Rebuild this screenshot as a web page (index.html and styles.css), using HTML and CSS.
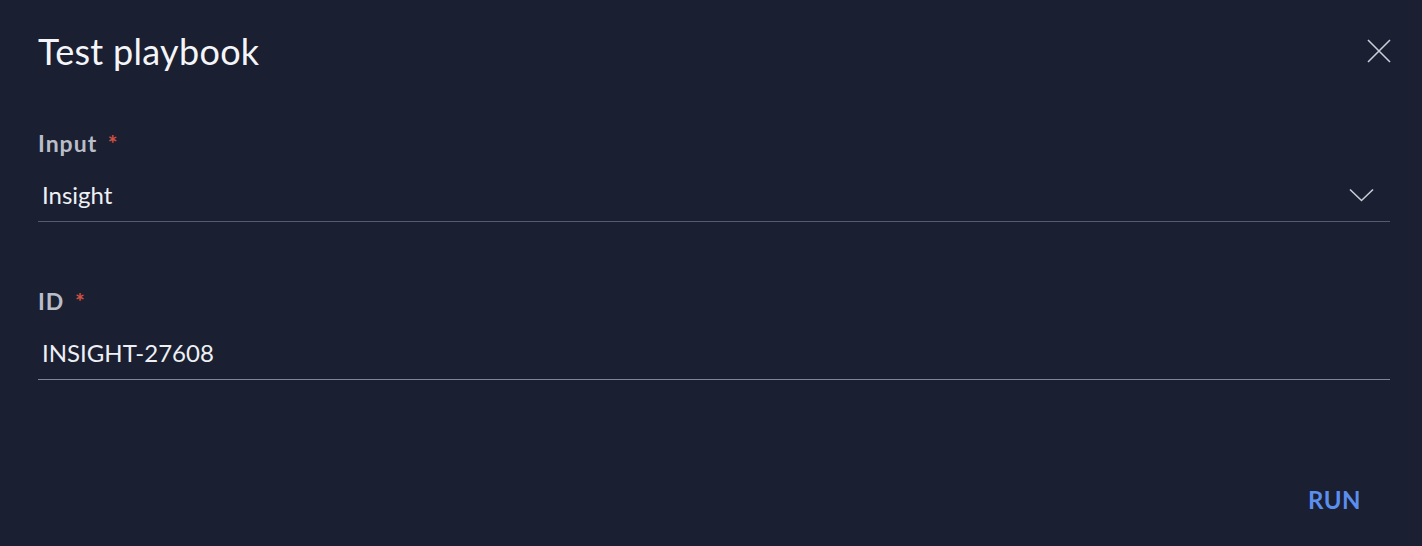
FILE: index.html
```html
<!DOCTYPE html>
<html>
<head>
<meta charset="utf-8">
<link rel="stylesheet" href="styles.css">
</head>
<body>
<div class="dialog">
  <header class="header">
    <h1 class="title">Test playbook</h1>
    <button class="close" aria-label="Close">
      <svg width="24" height="24" viewBox="0 0 24 24"><path d="M1 1L23 23M23 1L1 23" stroke="#c9cdd8" stroke-width="1.6" fill="none"/></svg>
    </button>
  </header>
  <div class="field field-first">
    <label class="label">Input <span class="req">*</span></label>
    <div class="control">
      <span class="value value-select">Insight</span>
      <svg class="chevron" width="25" height="14" viewBox="0 0 25 14"><path d="M1 1.5L12.5 12.5L24 1.5" stroke="#c9cdd8" stroke-width="1.6" fill="none"/></svg>
    </div>
  </div>
  <div class="field field-second">
    <label class="label">ID <span class="req">*</span></label>
    <div class="control control-text">
      <span class="value">INSIGHT-27608</span>
    </div>
  </div>
  <footer class="footer">
    <button class="run">RUN</button>
  </footer>
</div>
</body>
</html>
```
FILE: styles.css
```css
html, body {
  margin: 0;
  padding: 0;
  background: #1a1f32;
  height: 100%;
}
body {
  font-family: Lato, "Noto Sans", sans-serif;
  color: #eef0f4;
}
.dialog {
  padding: 0 32px 0 38px;
  height: 546px;
  box-sizing: border-box;
  display: flex;
  flex-direction: column;
}
.header {
  display: flex;
  justify-content: space-between;
  align-items: center;
  height: 102px;
}
.title {
  margin: 0;
  font-weight: 400;
  font-size: 36px;
  color: #f4f5f8;
  letter-spacing: 0.3px;
}
.close {
  background: none;
  border: 0;
  padding: 0;
  margin-right: -1px;
  width: 24px;
  height: 24px;
  display: flex;
}
.field {
  display: flex;
  flex-direction: column;
}
.field-first {
  margin-top: 24px;
}
.field-second {
  margin-top: 62px;
}
.label {
  font-size: 23px;
  font-weight: 700;
  color: #b9bdc8;
  line-height: 34px;
  letter-spacing: 1px;
}
.req {
  color: #d2523f;
  margin-left: 4px;
}
.control {
  display: flex;
  align-items: center;
  justify-content: space-between;
  height: 62px;
  box-sizing: border-box;
  border-bottom: 1px solid #545b70;
  padding: 8px 16px 0 4px;
}
.control-text {
  border-bottom-color: #7f8596;
}
.value {
  font-size: 24px;
  color: #eef0f4;
}
.footer {
  margin-top: auto;
  display: flex;
  justify-content: flex-end;
  padding: 0 29px 32px 0;
}
.run {
  background: none;
  border: 0;
  padding: 0;
  font-family: Lato, "Noto Sans", sans-serif;
  font-size: 24px;
  font-weight: 700;
  color: #5b8eed;
  letter-spacing: 0.5px;
}
```
